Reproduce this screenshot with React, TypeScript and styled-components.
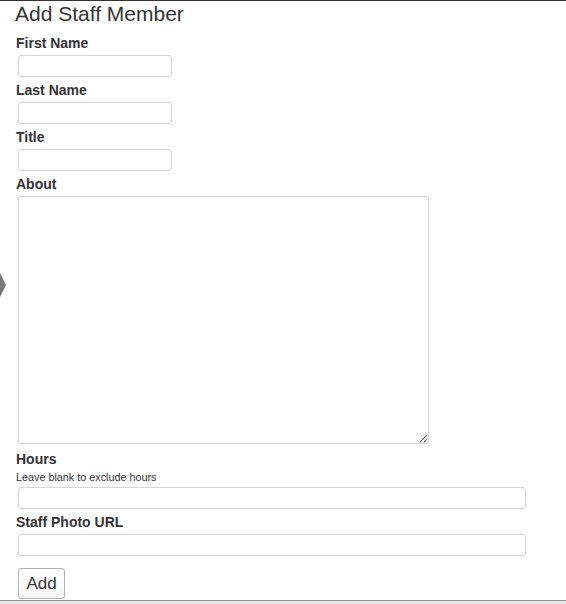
import React from "react";
import styled, { createGlobalStyle } from "styled-components";

const GlobalStyle = createGlobalStyle`
  html, body { margin: 0; padding: 0; background: #fff; }
  body { font-family: "Liberation Sans", Arial, sans-serif; color: #333; overflow: hidden; }
  * { box-sizing: border-box; }
`;

const Page = styled.div`
  position: relative;
  border-top: 1px solid #333;
  min-height: 603px;
`;

const Form = styled.form`
  padding: 2px 0 0 16px;
  display: flex;
  flex-direction: column;
  align-items: flex-start;
`;

const Heading = styled.h2`
  margin: 0 0 8px -1px;
  font-size: 21px;
  line-height: 22px;
  font-weight: normal;
  color: #333;
`;

const Label = styled.label<{ $mb?: number }>`
  display: block;
  font-size: 14px;
  line-height: 20px;
  font-weight: bold;
  color: #333;
  margin: 0 0 ${(p) => p.$mb ?? 2}px 0;
`;

const Help = styled.div`
  font-size: 10.8px;
  line-height: 16px;
  color: #333;
  margin: 0 0 2px 0;
`;

const Input = styled.input<{ $w: number }>`
  display: block;
  width: ${(p) => p.$w}px;
  height: 22px;
  margin: 0 0 3px 2px;
  padding: 2px 4px;
  border: 1px solid #d6d6d6;
  border-radius: 3px;
  font: 13px "Liberation Sans", Arial, sans-serif;
  background: #fff;
  outline: none;
`;

const TextArea = styled.textarea`
  display: block;
  width: 411px;
  height: 248px;
  margin: 0 0 5px 2px;
  padding: 4px;
  border: 1px solid #d6d6d6;
  border-radius: 3px;
  font: 13px "Liberation Sans", Arial, sans-serif;
  outline: none;
`;

const Button = styled.button`
  margin: 9px 0 0 2px;
  width: 47px;
  height: 31px;
  padding: 0;
  border: 1px solid #b3b3b3;
  border-radius: 3px;
  background: linear-gradient(#ffffff, #f6f6f6);
  font: 17px "Liberation Sans", Arial, sans-serif;
  color: #333;
`;

const Footer = styled.div`
  margin-top: 1px;
  height: 10px;
  border-top: 1px solid #8c8c8c;
  background: #e8e8e8;
`;

const SideArrow = styled.svg`
  position: absolute;
  left: 0;
  top: 270px;
`;

export default function App() {
  return (
    <>
      <GlobalStyle />
      <Page>
        <SideArrow width="8" height="28" viewBox="0 0 8 28">
          <polygon points="-6,14 0,2 6,14 0,26" fill="#777" />
        </SideArrow>
        <Form onSubmit={(e) => e.preventDefault()}>
          <Heading>Add Staff Member</Heading>
          <Label>First Name</Label>
          <Input $w={154} type="text" />
          <Label>Last Name</Label>
          <Input $w={154} type="text" />
          <Label>Title</Label>
          <Input $w={154} type="text" />
          <Label>About</Label>
          <TextArea />
          <Label $mb={0}>Hours</Label>
          <Help>Leave blank to exclude hours</Help>
          <Input $w={508} type="text" />
          <Label>Staff Photo URL</Label>
          <Input $w={508} type="text" />
          <Button type="submit">Add</Button>
        </Form>
        <Footer />
      </Page>
    </>
  );
}
